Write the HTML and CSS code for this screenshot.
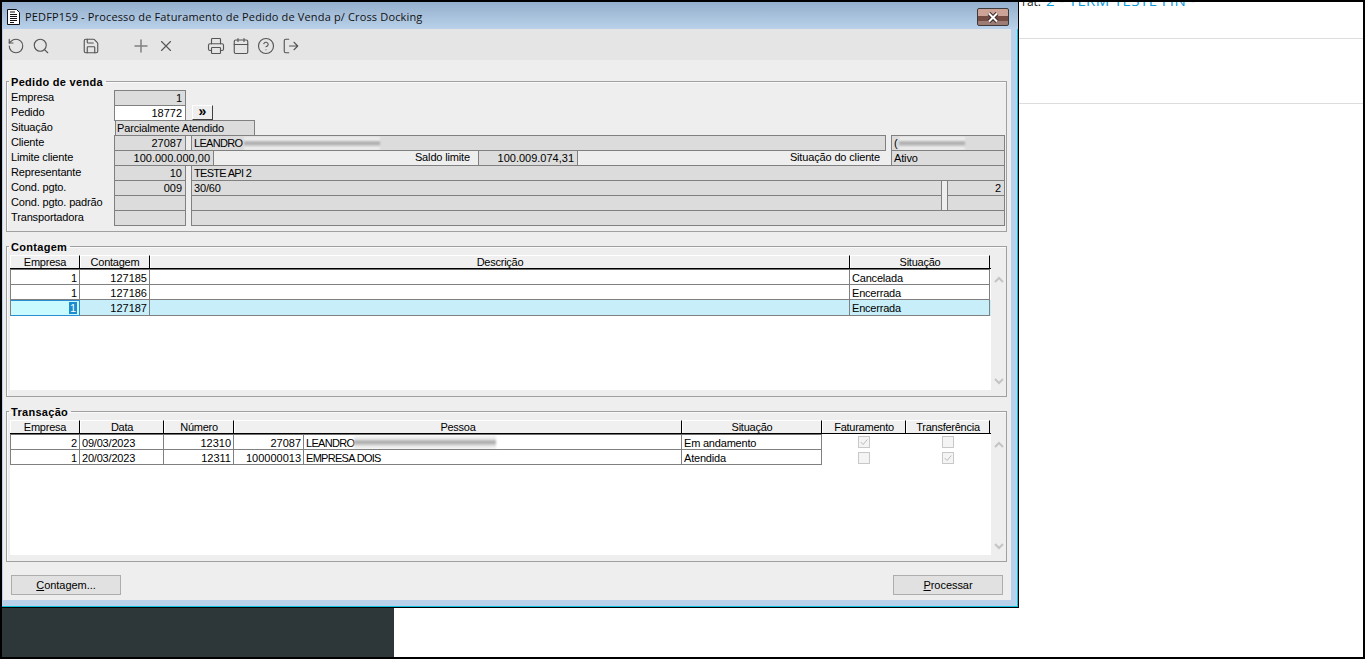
FILE: index.html
```html
<!DOCTYPE html>
<html lang="pt-BR">
<head>
<meta charset="utf-8">
<title>PEDFP159</title>
<link rel="stylesheet" href="styles.css">
</head>
<body>
<div class="screen">
  <div class="page">
    <div class="page-row page-row-top"><p class="crumb"><span class="crumb-label">rat:</span> <a class="crumb-link">2 - TERM TESTE FIN -</a></p></div>
    <div class="page-row page-row-second"></div>
  </div>
  <div class="dock"></div>
  <section class="window">
    <header class="titlebar">
      <svg class="doc-icon" viewBox="0 0 13 16" width="13" height="16"><path d="M.5.5h9l3 3v12H.5z" fill="#fff" stroke="#111"/><path d="M3 3h5M3 5.500h7M3 7.500h7M3 9.500h7M3 11.500h7M3 13.500h4" stroke="#111"/></svg>
      <h1 class="title">PEDFP159 - Processo de Faturamento de Pedido de Venda p/ Cross Docking</h1>
      <button class="close"><svg viewBox="0 0 14 11" width="14" height="11"><path d="M3 1.500l8 8M11 1.500l-8 8" stroke="#3c2a26" stroke-width="4"/><path d="M3 1.500l8 8M11 1.500l-8 8" stroke="#fff" stroke-width="2"/></svg></button>
    </header>
    <nav class="toolbar">
      <span class="tool"><svg viewBox="0 0 24 24"><path d="M3 12a9 9 0 1 0 9-9 9.750 9.750 0 0 0-6.740 2.740L3 8"/><path d="M3 3v5h5"/></svg></span>
      <span class="tool"><svg viewBox="0 0 24 24"><circle cx="11" cy="11" r="8"/><path d="m21 21-4.300-4.300"/></svg></span>
      <span class="tool"></span>
      <span class="tool"><svg viewBox="0 0 24 24"><path d="M15.200 3a2 2 0 0 1 1.400.6l3.800 3.800a2 2 0 0 1 .6 1.400V19a2 2 0 0 1-2 2H5a2 2 0 0 1-2-2V5a2 2 0 0 1 2-2z"/><path d="M17 21v-7a1 1 0 0 0-1-1H8a1 1 0 0 0-1 1v7"/><path d="M7 3v4a1 1 0 0 0 1 1h7"/></svg></span>
      <span class="tool"></span>
      <span class="tool tool-muted"><svg viewBox="0 0 24 24"><path d="M4 12h16M12 4v16"/></svg></span>
      <span class="tool"><svg viewBox="0 0 24 24"><path d="M18 6 6 18M6 6l12 12"/></svg></span>
      <span class="tool"></span>
      <span class="tool"><svg viewBox="0 0 24 24"><path d="M6 18H4a2 2 0 0 1-2-2v-5a2 2 0 0 1 2-2h16a2 2 0 0 1 2 2v5a2 2 0 0 1-2 2h-2"/><path d="M6 9V3a1 1 0 0 1 1-1h10a1 1 0 0 1 1 1v6"/><rect x="6" y="14" width="12" height="8" rx="1"/></svg></span>
      <span class="tool"><svg viewBox="0 0 24 24"><path d="M8 2v4M16 2v4M3 10h18"/><rect x="3" y="4" width="18" height="18" rx="2"/></svg></span>
      <span class="tool"><svg viewBox="0 0 24 24"><circle cx="12" cy="12" r="10"/><path d="M9.090 9a3 3 0 0 1 5.830 1c0 2-3 3-3 3M12 17h.01"/></svg></span>
      <span class="tool"><svg viewBox="0 0 24 24"><path d="M9 21H5a2 2 0 0 1-2-2V5a2 2 0 0 1 2-2h4"/><path d="m16 17 5-5-5-5M21 12H10"/></svg></span>
    </nav>
    <main class="client">
      <fieldset class="group group-first">
        <legend>Pedido de venda</legend>
        <div class="form">
          <span class="lbl">Empresa</span><span class="fld num c-code">1</span>

          <span class="lbl">Pedido</span><span class="fld num c-code fld-white">18772</span><button class="more">»</button>

          <span class="lbl">Situação</span><span class="fld c-status">Parcialmente Atendido</span>

          <span class="lbl">Cliente</span><span class="fld num c-code">27087</span><span class="fld c-name"><span class="caps">LEANDRO</span><i class="blur blur-name"></i></span><span class="fld c-side">(<i class="blur blur-side"></i></span>

          <span class="lbl">Limite cliente</span><span class="fld num c-limit">100.000.000,00</span><span class="lbl lbl-r c-saldo-l">Saldo limite</span><span class="fld num c-saldo">100.009.074,31</span><span class="lbl lbl-r c-sit-l">Situação do cliente</span><span class="fld c-side">Ativo</span>

          <span class="lbl">Representante</span><span class="fld num c-code">10</span><span class="fld c-wide"><span class="caps">TESTE API 2</span></span>

          <span class="lbl">Cond. pgto.</span><span class="fld num c-code">009</span><span class="fld c-mid">30/60</span><span class="fld num c-end">2</span>

          <span class="lbl">Cond. pgto. padrão</span><span class="fld num c-code"></span><span class="fld c-mid"></span><span class="fld num c-end"></span>

          <span class="lbl">Transportadora</span><span class="fld num c-code"></span><span class="fld c-wide"></span>
        </div>
      </fieldset>

      <fieldset class="group">
        <legend>Contagem</legend>
        <div class="gridbox">
          <div class="table">
            <div class="thead cols-a"><span>Empresa</span><span>Contagem</span><span>Descrição</span><span>Situação</span></div>
            <div class="row cols-a row-first"><span class="num">1</span><span class="num">127185</span><span></span><span>Cancelada</span></div>
            <div class="row cols-a"><span class="num">1</span><span class="num">127186</span><span></span><span>Encerrada</span></div>
            <div class="row cols-a row-sel"><span class="num cell-focus"><b class="mark">1</b></span><span class="num">127187</span><span></span><span>Encerrada</span></div>
          </div>
          <div class="scroll">
            <svg viewBox="0 0 10 7" width="10" height="7"><path d="M1 6l4-4 4 4" /></svg>
            <svg viewBox="0 0 10 7" width="10" height="7"><path d="M1 1l4 4 4-4" /></svg>
          </div>
        </div>
      </fieldset>

      <fieldset class="group">
        <legend>Transação</legend>
        <div class="gridbox">
          <div class="table">
            <div class="thead cols-h"><span>Empresa</span><span>Data</span><span>Número</span><span>Pessoa</span><span>Situação</span><span>Faturamento</span><span>Transferência</span></div>
            <div class="row cols-b row-first"><span class="num">2</span><span>09/03/2023</span><span class="num">12310</span><span class="num">27087</span><span><span class="caps">LEANDRO</span><i class="blur blur-person"></i></span><span>Em andamento</span><span class="check"><i class="box"><svg viewBox="0 0 12 12"><path d="M2 6l3 3 5-6"/></svg></i></span><span class="check"><i class="box"></i></span></div>
            <div class="row cols-b"><span class="num">1</span><span>20/03/2023</span><span class="num">12311</span><span class="num">100000013</span><span><span class="caps">EMPRESA DOIS</span></span><span>Atendida</span><span class="check"><i class="box"></i></span><span class="check"><i class="box"><svg viewBox="0 0 12 12"><path d="M2 6l3 3 5-6"/></svg></i></span></div>
          </div>
          <div class="scroll">
            <svg viewBox="0 0 10 7" width="10" height="7"><path d="M1 6l4-4 4 4" /></svg>
            <svg viewBox="0 0 10 7" width="10" height="7"><path d="M1 1l4 4 4-4" /></svg>
          </div>
        </div>
      </fieldset>

      <footer class="actions">
        <button class="btn"><u>C</u>ontagem...</button>
        <button class="btn"><u>P</u>rocessar</button>
      </footer>
    </main>
  </section>
</div>
</body>
</html>
```
FILE: styles.css
```css
* { box-sizing: border-box; }
html, body { margin: 0; padding: 0; height: 100%; overflow: hidden; background: #000; }
body { padding: 2px; font: 11px/15px "Liberation Sans", Arial, sans-serif; color: #000; }

.screen { position: relative; width: 1361px; height: 655px; background: #fff; overflow: hidden; }

/* page behind the window */
.page { margin-left: 1017px; }
.page-row { border-bottom: 1px solid #ddd; overflow: hidden; }
.page-row-top { height: 37px; }
.page-row-second { height: 65px; }
.crumb { margin: -12px 0 0 3px; font: 15px/20px "Open Sans", sans-serif; color: #222; white-space: nowrap; }
.crumb-label { font-size: 12px; }
.crumb-link { margin-left: 1px; color: #0a9bdc; letter-spacing: .4px; }
.dock { position: absolute; left: 0; bottom: 0; width: 392px; height: 50px; background: #2d3739; }

/* window */
.window {
  position: absolute; left: 0; top: 0; width: 1017px; height: 606px;
  display: flex; flex-direction: column;
  padding: 0 7px 7px 1px;
  background: #b9d1ea;
  border-right: 1px solid #000;
  border-bottom: 1px solid #000;
  box-shadow: inset -1px -1px 0 #10c0e0;
}
.titlebar {
  flex: none; height: 27px; margin: 0 -7px 0 -1px; padding: 3px 9px 0 5px;
  display: flex; align-items: center;
  background: linear-gradient(#94afcc, #b9d1ea);
}
.doc-icon { flex: none; margin-right: 5px; }
.title { flex: 1; margin: 0; font: 400 11px/16px "Open Sans", sans-serif; letter-spacing: .15px; color: #111; white-space: nowrap; }
.close {
  width: 32px; height: 18px; padding: 0; display: flex; align-items: center; justify-content: center;
  border: 1px solid #3f3a3a; border-radius: 2px;
  background: linear-gradient(#cda397 0 45%, #744c43 45% 75%, #9c7c74 75%);
}

.toolbar { flex: none; height: 31px; padding-top: 3px; display: flex; align-items: center; background: #e5e5e5; }
.tool { width: 25px; height: 18px; display: flex; justify-content: center; }
.tool svg { width: 18px; height: 18px; fill: none; stroke: #555; stroke-width: 1.500; stroke-linecap: round; stroke-linejoin: round; }
.tool-muted svg { stroke: #808080; stroke-width: 2; }

.client { flex: 1; padding: 0 4px 0 3px; background: #eee; }

.group { margin: 8px 0 0; padding: 2px 0 6px 3px; min-width: 0; border: 1px solid #a0a0a0; width: 1001px; height: 157px; box-shadow: inset 1px 1px 0 #fafafa; }
.group-first { margin-top: 15px; }
.group legend { margin-left: -1px; padding: 0 3px 0 2px; font-weight: 700; line-height: 15px; height: 13px; letter-spacing: .3px; }

/* form */
.form {
  display: grid;
  grid-template-columns: 104px 72px 5px 22px 42px 223px 100px 308px 5px 51px 5px 58px;
  grid-auto-rows: 15px;
  height: 136px;
  letter-spacing: -.15px;
}
.lbl { grid-column: 1; padding-left: 1px; white-space: nowrap; line-height: 15px; }
.lbl-r { text-align: right; padding: 0; }
.fld { height: 16px; padding: 0 2px; border: 1px solid #808080; background: #dcdcdc; white-space: nowrap; overflow: hidden; line-height: 15px; }
.num { text-align: right; letter-spacing: 0; }
.fld.num { padding-right: 3px; }
.caps { letter-spacing: -.7px; }
.fld-white { background: #fff; }
.c-code { grid-column: 2; }
.c-status { grid-column: 2 / 6; margin-left: 1px; padding-left: 1px; }
.c-name { grid-column: 4 / 9; }
.c-side { grid-column: 10 / 13; }
.c-limit { grid-column: 2 / 5; margin-right: -1px; }
.c-saldo-l { grid-column: 5 / 7; padding-right: 8px; }
.c-saldo { grid-column: 7; }
.c-sit-l { grid-column: 8; padding-right: 6px; }
.c-wide { grid-column: 4 / 13; }
.c-mid { grid-column: 4 / 11; }
.c-end { grid-column: 12; }

.more {
  grid-column: 3 / 5; margin-left: 6px; height: 15px; padding: 0 0 3px;
  border: 1px solid; border-color: #fff #404040 #404040 #fff;
  background: #eee; font: 700 14px/11px "Liberation Sans", sans-serif;
}

.blur { display: inline-block; vertical-align: top; height: 13px; margin-top: 1px; filter: blur(.9px); background: linear-gradient(#eee 0 25%, #a4a4a4 42%, #bcbcbc 60%, #eee 78%); }
.blur-name { width: 136px; margin-left: 2px; }
.blur-side { width: 66px; margin-left: 1px; }
.blur-person { width: 142px; }

/* data grids */
.gridbox { display: flex; height: 135px; }
.table { width: 981px; background: #fff; }
.scroll { width: 15px; padding: 21px 2px 5px 2px; display: flex; flex-direction: column; justify-content: space-between; align-items: center; }
.scroll svg { fill: none; stroke: #c4c4c4; stroke-width: 2; }

.cols-a { display: grid; grid-template-columns: 70px 70px 700px 140px; }
.cols-h { display: grid; grid-template-columns: 70px 84px 70px 448px 140px 84px 84px; }
.cols-b { display: grid; grid-template-columns: 70px 84px 70px 70px 378px 140px 84px 84px; }

.thead { height: 14px; background: #f0f0f0; border-bottom: 1px solid #000; }
.thead > span { text-align: center; line-height: 12px; height: 13px; border-right: 1px solid #000; border-left: 1px solid #fff; border-top: 1px solid #fff; letter-spacing: -.25px; white-space: nowrap; }

.row { height: 15px; letter-spacing: -.2px; }
.row-first { height: 16px; }
.row > span { padding: 0 2px; height: 15px; line-height: 16px; white-space: nowrap; overflow: hidden; border-right: 1px solid #808080; border-bottom: 1px solid #808080; }
.row-first > span { height: 16px; border-top: 1px solid #707070; }
.row > .num { letter-spacing: 0; }
.row > span:first-child { border-left: 1px solid #808080; }
.row-sel { height: 16px; background: #c8eefa; }
.row-sel > span { height: 16px; }
.row > .cell-focus { background: #c8fafe; border: 1px solid #2a8fd0; line-height: 14px; }
.mark { font-weight: 400; background: #1a8ed0; color: #fff; padding: 0 1px; }
.row > .check { display: flex; justify-content: center; align-items: center; border: 0; padding: 0; }
.box { width: 12px; height: 12px; display: block; border: 1px solid #c8c8c8; background: #f4f4f4; }
.box svg { display: block; width: 10px; height: 10px; fill: none; stroke: #b0b0b0; }

/* footer buttons */
.actions { margin: 13px 4px 0 5px; display: flex; justify-content: space-between; }
.btn { width: 110px; height: 20px; padding: 0; border: 1px solid #adadad; background: #e1e1e1; color: #000; font: 11px/18px "Liberation Sans", sans-serif; letter-spacing: -.05px; }
```
